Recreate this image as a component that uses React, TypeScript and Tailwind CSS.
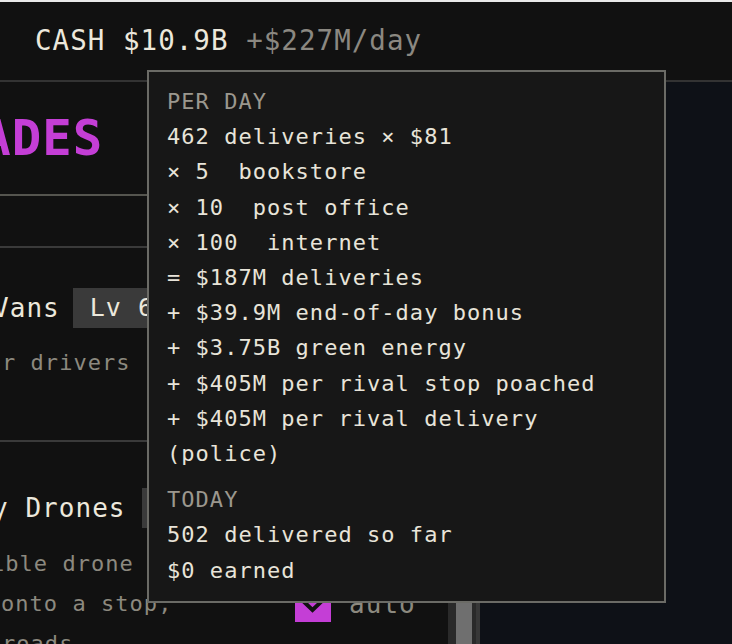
import React from 'react';

const breakdown = [
  '462 deliveries × $81',
  '× 5  bookstore',
  '× 10  post office',
  '× 100  internet',
  '= $187M deliveries',
  '+ $39.9M end-of-day bonus',
  '+ $3.75B green energy',
  '+ $405M per rival stop poached',
  '+ $405M per rival delivery (police)',
];

function Badge({ children }: { children: React.ReactNode }) {
  return (
    <div className="h-[40px] flex items-center pl-[17px] pr-[16px] bg-[#3a3a3a] text-[25px] text-[#ece8dc] whitespace-nowrap">
      {children}
    </div>
  );
}

function IncomeTooltip() {
  return (
    <div className="absolute left-[147px] top-[70px] w-[519px] border-2 border-[#6b6b66] bg-[#171717] px-[18px] pt-[12px] pb-[13px] text-[22px] leading-[35.2px] text-[#e8e4d9] whitespace-pre-wrap">
      <div className="text-[#9b978e]">PER DAY</div>
      {breakdown.map((line, i) => (
        <div key={i}>{line}</div>
      ))}
      <div className="mt-[11px] text-[#9b978e]">TODAY</div>
      <div>502 delivered so far</div>
      <div>$0 earned</div>
    </div>
  );
}

export default function App() {
  return (
    <div className="relative h-[644px] w-[732px] overflow-hidden flex flex-col bg-[#111111] font-['DejaVu_Sans_Mono',monospace] tracking-[0.065em]">
      <div className="h-[2px] bg-[#e9e9e9]" />

      {/* top bar */}
      <div className="h-[80px] flex items-center pl-[35px] border-b-2 border-[#333333] text-[27.5px] whitespace-nowrap">
        <span className="text-[#ece8dc]">CASH $10.9B</span>
        <span className="text-[#8b8881]">&nbsp;+$227M/day</span>
      </div>

      <div className="flex flex-1 min-h-0">
        {/* upgrades panel */}
        <div className="w-[448px] overflow-hidden flex flex-col whitespace-nowrap">
          <div className="h-[114px] shrink-0 flex items-center border-b-2 border-[#55554f]">
            <span className="ml-[-141px] text-[49px] font-bold leading-none text-[#c43ed6]">UPGRADES</span>
          </div>
          <div className="h-[52px] shrink-0 border-b-2 border-[#3a3a3a]" />

          <div className="h-[194px] shrink-0 pt-[40px] border-b-2 border-[#3a3a3a]">
            <div className="flex items-center gap-[13px] h-[40px]">
              <span className="ml-[-7px] text-[26px] text-[#ece8dc]">Vans</span>
              <Badge>Lv 6</Badge>
            </div>
            <div className="mt-[15px] text-[22px] leading-[40px] text-[#8c897f]">
              <div className="ml-[2px]">r drivers</div>
            </div>
          </div>

          <div className="pt-[46px]">
            <div className="flex items-center h-[40px]">
              <span className="ml-[-8px] text-[26px] text-[#ece8dc]">y Drones</span>
              <div className="ml-[16px]">
                <Badge>Lv 1</Badge>
              </div>
            </div>
            <div className="mt-[16px] flex">
              <div className="w-[295px] shrink-0 text-[22px] leading-[40px] text-[#8c897f]">
                <div className="ml-[-9px]">ible drone</div>
                <div className="ml-[1px]">onto a stop,</div>
                <div className="ml-[2px]">roads</div>
              </div>
              <div className="pt-[42px] flex items-start">
                <div className="flex items-center gap-[18px] h-[36px]">
                  <div className="w-[36px] h-[36px] bg-[#c43ed6] flex items-center justify-center">
                    <svg width="36" height="36" viewBox="0 0 36 36" fill="none">
                      <polyline points="8,15 17.5,24 28,14" stroke="#111111" strokeWidth="4" strokeLinecap="square" />
                    </svg>
                  </div>
                  <span className="text-[26px] text-[#8c897f]">auto</span>
                </div>
              </div>
            </div>
          </div>
        </div>

        {/* scrollbar */}
        <div className="w-[32px] shrink-0 flex">
          <div className="w-[28px] bg-[#2a2a2a] px-[8px] pr-[4px] pt-[320px]">
            <div className="h-full bg-[#6f6f6f]" />
          </div>
          <div className="w-[4px] bg-[#383838]" />
        </div>

        {/* map area */}
        <div className="flex-1 bg-[#0e1117]" />
      </div>

      <IncomeTooltip />
    </div>
  );
}
